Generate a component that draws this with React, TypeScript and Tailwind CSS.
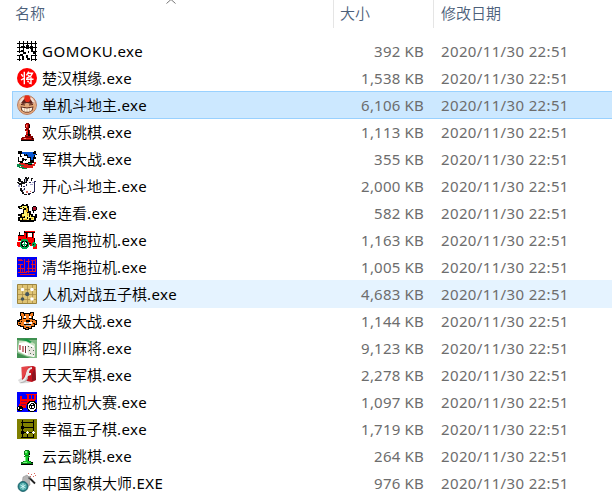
import type { ReactNode } from 'react';
import clsx from 'clsx';

type FileRow = {
  name: string;
  ext?: string;
  size: string;
  icon: ReactNode;
  state?: 'selected' | 'hover';
};

const modified = '2020/11/30 22:51';

const Icon = ({ children, smooth = false }: { children: ReactNode; smooth?: boolean }) => (
  <svg
    viewBox="0 0 20 20"
    className="h-5 w-5 shrink-0"
    shapeRendering={smooth ? 'auto' : 'crispEdges'}
    fill="none"
  >
    {children}
  </svg>
);

const files: FileRow[] = [
  {
    name: '',
    ext: 'GOMOKU.exe',
    size: '392 KB',
    icon: (
      <Icon>
        <path fill="#000" d="M0 2h20v1H0zM0 6h20v1H0zM0 10h4v1H0zM15 10h5v1h-5zM0 14h6v1H0zM14 14h6v1h-6zM0 18h4v1H0zM14 18h6v1h-6zM2 0h1v12H2zM2 14h1v6H2zM6 0h1v9H6zM10 0h1v6h-1zM14 0h1v8h-1zM14 15h1v5h-1zM18 0h1v20h-1z" />
        <path fill="#000" d="M4 5h4v2H4zM9 4h3v4H9zM13 5h3v3h-3zM4 9h3v2H4zM6 11h3v2H6zM14 8h2v3h-2zM5 15h2v4H5zM11 10h1v2h-1zM9 14h2v3H9zM16 11h2v2h-2zM10 17h3v2h-3zM3 13h3v1H3z" />
      </Icon>
    ),
  },
  {
    name: '楚汉棋缘',
    size: '1,538 KB',
    icon: (
      <Icon smooth>
        <circle cx="10" cy="10" r="10" fill="#f00" />
        <path stroke="#fff" strokeWidth="1.4" d="M7.3 3.8v12.5M4.3 6.2l1.6 2.5M4 12l3-1.7M11.8 3.7 9.4 7.4M11 5.2h4.4l-1.7 3-4.2 2M11 7l1.5 1.2M9 11.2h7.5M14 9.3v6.3l-2-.7M10.5 12.8l1.2 1.5" />
      </Icon>
    ),
  },
  {
    name: '单机斗地主',
    size: '6,106 KB',
    state: 'selected',
    icon: (
      <Icon smooth>
        <circle cx="10" cy="10" r="9.4" fill="#e8b795" stroke="#b57457" />
        <path fill="#e3a878" d="M2 9h16l1 3-3 5-6 2-6-2-3-5z" />
        <path fill="#62261c" d="M4 8c0-4 3-5 6-5s6 1 7 5l-3 1-4-1-4 1z" />
        <path fill="#e52b19" d="M7 4l1-3.5h4L14 4l-2 3H9z" />
        <path fill="#f4ded0" d="M2.500 7l3-4.500 2 1L4 8zM13 3.500l2-1L17.500 7 16 8z" />
        <path fill="#552014" d="M4 9l4 .5v1L4 10zM12 9.5l4-.5v1l-4 .5zM3.5 11.5l6.500 1 6.500-1-1 4L12 17.500H8l-3.5-2z" />
        <path fill="#fff3dc" d="M4.5 12.5l5.500 1 5.500-1-1 3-2.5 1.300H8l-2.5-1.300z" />
        <path stroke="#b58060" strokeWidth=".4" d="M7.5 13v3.5M10 13.5V17M12.5 13v3.5" />
      </Icon>
    ),
  },
  {
    name: '欢乐跳棋',
    size: '1,113 KB',
    icon: (
      <Icon>
        <path fill="#800" d="M9 1h3v1h1v4h-1v2h1v4h1v2h2v2h1v3H4v-3h1v-1h3v-2h1V9H8V7h1V6H8V2h1z" />
        <path fill="#e01812" d="M9 2h2v4H9zM9 8h2v4H9zM9 13h3v1H9zM6 16h8v1H6z" />
        <path fill="#ff8b80" d="M9 3h1v2H9zM9 9h1v1H9zM7 16h2v1H7z" />
        <path fill="#000" d="M12 3h1v3h-1zM11 8h1v4h1v2h-2zM4 18h13v1H4zM15 16h1v1h-1z" />
      </Icon>
    ),
  },
  {
    name: '军棋大战',
    size: '355 KB',
    icon: (
      <Icon>
        <path fill="#000" d="M1 2h4v1h12V2h2v3h1v1h-2v2h1v2h-2v4h-2v2h-4v1H6v-2H3v-2H1V8h2V5H1z" />
        <path fill="#0757d5" d="M5 3h11v2H5zM8 5h11v1H8zM11 6h6v2h-6zM14 8h2v3h-2z" />
        <path fill="#fff" d="M4 5h3v2H4zM2 8h3v4H2zM5 7h5v3H5zM10 9h3v4h-2v1H7v-3h3zM6 12h3v2H6z" />
        <path fill="#e1201a" d="M2 14h6v1h3v1h4v-1h2v-2h2v2h-1v2h-2v2H7v-1H4v-1H2z" />
        <path fill="#078b4b" d="M0 15h4v1h3v1H3v1h4v1h3v1H5v-1H2v-1H0zM11 14h4v1h-4z" />
        <path fill="#000" d="M5 9h2v1H5zM9 5h1v2H9zM8 11h1v1H8zM13 11h1v2h-1z" />
      </Icon>
    ),
  },
  {
    name: '开心斗地主',
    size: '2,000 KB',
    icon: (
      <Icon>
        <path fill="#fff" d="M3 4h5v3h5l5-2v11l-4 2-6 1-4-4 1-5-2-4z" />
        <path fill="#111" d="M1 2h2v1h1v2h2v1h1V3h1V1h2v1h1V1h1v2h-1v2h-1v2H8v1H5v3H4V9H2V8H1V7H0V6h2v1h2V6H2V5H1zM14 2h2v1h-1v2h-1zM4 12h1v2h1v2h1v2H5v-2H4v-1H3v-3zM7 18h3v1H7zM11 18h2v1h-2zM15 16h2v1h-2z" />
        <path fill="#262657" d="M9 8h1v2H9zM12 6h2v1h-2zM17 5h2v1h-1v10h-1zM11 17h3v1h-3zM6 10h2v1H6zM7 12h1v2H7z" />
        <path fill="#a8a8cf" d="M8 3h1v3H8zM1 9h2v2H1zM6 13h1v2H6zM15 6h2v1h-2zM16 15h1v1h-1zM13 8h3v1h-3z" />
        <path fill="#d76a61" d="M9 15h2v2H9zM13 15h1v1h-1z" />
      </Icon>
    ),
  },
  {
    name: '连连看',
    size: '582 KB',
    icon: (
      <Icon>
        <path fill="#000" d="M5 1h2v1h2V1h2v2h1v5h2v3h2v2h2v-2h2v4h-1v3h-2v1H3v-1H1v-4h2v-1H1v-2h3v-1h2V6H2V5H1V3h3V2h1z" />
        <path fill="#fff36c" d="M5 3h5v2H7v1H5V5H3V4h2zM7 7h3v3h2v2h2v3h-2v2H6v-2h2v-2H5v-2h2zM3 15h2v2H3zM14 14h3v3h-3z" />
        <path fill="#d9a816" d="M9 5h2v4H9zM10 10h1v3h-1zM5 13h2v1H5zM6 16h4v1H6zM14 15h2v1h-2z" />
        <path fill="#000" d="M16 3h3v1h1v3h-1v1h-2v2h-1V8h-1V4h1z" />
        <path fill="#b1162f" d="M16 4h3v3h-3z" />
        <path fill="#000" d="M6 4h1v1H6zM12 12h1v2h-1zM10 14h1v2h-1z" />
      </Icon>
    ),
  },
  {
    name: '美眉拖拉机',
    size: '1,163 KB',
    icon: (
      <Icon>
        <path fill="#f00" d="M8 1h10v2h-1v5h1v6h2v5h-4v-3h-3v-1h-3v-4H7V9H1V5h6V3h1zM0 12h3v5H1v-1H0z" />
        <path fill="#f00" d="M1 5h8v6H1z" />
        <path fill="#fff" d="M11 3h4v4h-4zM9 3h1v3H9z" />
        <path fill="#000" d="M7 1h1v1h10v1H7zM2 2h1v3H2zM1 5h6v1H1zM9 3h1v5H9zM15 2h1v6h-1zM17 8h1v4h-1zM2 9h2v1H2zM11 13h3v1h-3z" />
        <path fill="#00a850" d="M5 9h5v1h1v2h1v5h-1v1h-1v1H5v-1H4v-1H3v-5h1v-2h1zM16 12h2v1h1v3h-1v1h-2v-1h-1v-3h1z" />
        <path fill="#000" d="M5 11h5v1h1v4h-1v1H5v-1H4v-4h1zM16 14h1v1h-1z" />
        <path fill="#fff" d="M6 12h3v1h1v2H9v1H6v-1H5v-2h1z" />
        <path fill="#00a850" d="M7 11h1v6H7zM5 14h5v1H5z" />
      </Icon>
    ),
  },
  {
    name: '清华拖拉机',
    size: '1,005 KB',
    icon: (
      <Icon>
        <path fill="#0000f5" d="M0 0h20v20H0z" />
        <path stroke="#e0142c" d="M1 3.5h5M1 7.5h5M1 11.5h7M3.5 8v8M1 15.5h9M7.5 2v13M11.5 2v14M9 4.5h4M10 11.5h9M15.5 3v11M14 7.5h5M18.5 2v12M9 14.5h10M3 17.5h15" />
        <path stroke="#a80f65" d="M1 2.5h4M5.5 12v3M14 3.5h5" />
      </Icon>
    ),
  },
  {
    name: '人机对战五子棋',
    size: '4,683 KB',
    state: 'hover',
    icon: (
      <Icon smooth>
        <path fill="#dfc474" stroke="#9d853e" d="M.5.5h19v19H.5z" />
        <path stroke="#a88d4a" strokeWidth=".8" d="M1 5.5h18M1 10.5h18M1 15.5h18M5.5 1v18M10.5 1v18M15.5 1v18" />
        <circle cx="5.5" cy="5.5" r="1.8" fill="#fff" />
        <circle cx="15" cy="5.5" r="1.8" fill="#fff" />
        <circle cx="15" cy="15" r="1.8" fill="#fff" />
        <circle cx="10.2" cy="10.2" r="2.1" fill="#43545d" />
        <circle cx="5.5" cy="15" r="1.8" fill="#43545d" />
      </Icon>
    ),
  },
  {
    name: '升级大战',
    size: '1,144 KB',
    icon: (
      <Icon>
        <path fill="#000" d="M3 1h4v1h6V1h4v4h-1v3h2v1h2v5h-2v2h-3v2h-3v1H8v-1H6v-2H3v-1H1v-1H0V9h2V8h2V5H3z" />
        <path fill="#f37d1d" d="M4 2h2v1h8V2h2v3h-1v4h3v1h1v3h-2v2h-3v2h-3v1H9v-1H7v-2H4v-1H1v-3h2V9h2V5H4z" />
        <path fill="#000" d="M7 3h1v2H7zM12 3h1v2h-1zM6 7h3v1H6zM12 7h3v1h-3zM9 9h4v2H9zM2 12h2v1H2zM16 12h2v1h-2zM15 10h1v1h-1zM4 10h1v1H4zM7 13h7v1H7zM9 16h3v1H9z" />
        <path fill="#fff" d="M7 5h2v2H7zM12 5h2v2h-2zM7 11h2v2H7zM12 11h3v2h-3z" />
        <path fill="#bbb" d="M9 12h3v1H9zM9 14h5v1H9z" />
      </Icon>
    ),
  },
  {
    name: '四川麻将',
    size: '9,123 KB',
    icon: (
      <Icon smooth>
        <path fill="#82b986" d="M0 0h20v20H0z" />
        <path fill="#3f8f50" d="M0 0h20v2H0zM0 15l13 5H0z" />
        <path fill="#c9e2c3" d="M2 3h11l5 3v13l-8-1-9-4z" />
        <path fill="#fff" d="M2 5l7-1 8 4v11l-8-2-8-4z" />
        <path fill="#e8e5df" d="M10 7l8 3v8l-7-1z" />
        <path stroke="#ad292f" strokeWidth="1.2" d="M3 7v5M6 8v6" />
        <path stroke="#722e37" d="M8.5 8v7" />
        <path fill="#159744" d="M4 2l6-1 5 3-2 1-4-2z" />
        <path fill="#477151" d="M11 8h1v1h-1zM14 9h1v1h-1zM12 12h1v1h-1zM16 12h1v1h-1zM13 15h1v1h-1zM16 16h1v1h-1z" />
      </Icon>
    ),
  },
  {
    name: '天天军棋',
    size: '2,278 KB',
    icon: (
      <Icon smooth>
        <path fill="#ddd" d="M1 15l8-5 10 5-8 3-8 .5z" />
        <path fill="#c4151f" d="M4.5 2L16 1l2.500 1 .5 13-4 2-10-2z" />
        <path fill="#e54448" d="M5 2l7-.5-2 4-4 8H5z" />
        <path fill="#8c1420" d="M15 9l3-6 1 12-4 1z" />
        <path fill="#e9e9e9" d="M15 2c-3 0-5 2-6 6-1 4-2 7-7 8l1 2c6-1 7-4 8-7l3-1V8h-2c0-2 1-4 3-4z" />
        <path fill="#b8b8b8" d="M3 17c4 0 6-2 7-5l1 1c-1 3-3 5-7 5z" />
      </Icon>
    ),
  },
  {
    name: '拖拉机大赛',
    size: '1,097 KB',
    icon: (
      <Icon>
        <path fill="#00f" d="M0 0h20v20H0z" />
        <path fill="#f00" d="M9 2h11v1h-1v5h-1v2h1v3H9v3H2v-4h1V7h7V3H9zM3 4h2v4H3z" />
        <path fill="#00f" d="M12 3h2v4h-2zM15 3h2v4h-2z" />
        <path fill="#900050" d="M4 9h6v1H4zM4 12h5v1H4z" />
        <path fill="#000" d="M12 9h6v1h1v1h1v6h-1v2h-2v1h-4v-1h-2v-2h-1v-6h1v-1h1zM1 14h4v1h1v3H5v1H1v-1H0v-3h1z" />
        <path fill="#fff" d="M13 10h4v1h1v1h1v5h-1v1h-1v1h-4v-1h-1v-1h-1v-5h1v-1h1zM1 15h1v2H1zM3 17h2v1H3z" />
        <path fill="#000" d="M14 11h3v1h1v4h-1v1h-4v-1h-1v-3h1v-1h1z" />
        <path fill="#fff" d="M14 12h2v1h-2zM13 14h1v2h-1zM15 14h2v2h-2z" />
      </Icon>
    ),
  },
  {
    name: '幸福五子棋',
    size: '1,719 KB',
    icon: (
      <Icon>
        <path fill="#808000" d="M0 0h20v20H0z" />
        <path fill="#000" d="M5 1h1v18H5zM16 1h1v18h-1zM4 3h13v1H4zM4 8h13v1H4zM4 13h14v1H4zM4 18h13v1H4zM4 7h3v3H4zM4 12h3v3H4zM10 13h1v5h-1z" />
        <path fill="#fff" d="M10 12h1v1h1v1h-1v1h-1v-1H9v-1h1zM16 12h1v1h1v1h-1v1h-1v-1h-1v-1h1z" />
        <path fill="#808000" d="M13 14h3v1h-3z" />
      </Icon>
    ),
  },
  {
    name: '云云跳棋',
    size: '264 KB',
    icon: (
      <Icon>
        <path fill="#087c16" d="M8 4h4v1h1v4h-1v1h1v1h-1v4h2v1h2v3H4v-3h2v-1h2v-4H7v-1h1V9H7V5h1z" />
        <path fill="#11cc25" d="M8 5h3v4H8zM8 10h3v5h1v1H7v-1h1zM6 16h8v1H6z" />
        <path fill="#7cf283" d="M8 5h2v2H8zM8 11h1v4H8zM6 16h4v1H6z" />
        <path fill="#000" d="M4 18h12v1H4zM12 7h1v2h-1zM11 12h1v3h-1zM14 16h2v1h-2z" />
      </Icon>
    ),
  },
  {
    name: '中国象棋大师',
    ext: '.EXE',
    size: '976 KB',
    icon: (
      <Icon smooth>
        <path fill="#b5b5b5" stroke="#888" strokeWidth=".5" d="M6 4l4-2 2 2 1 8-3 2-5-3z" />
        <circle cx="6" cy="13.5" r="5" fill="#247c82" stroke="#145b63" strokeWidth=".8" />
        <circle cx="6" cy="13.5" r="3.7" fill="#50aaa9" />
        <path stroke="#dff" strokeWidth=".8" d="M6 10.5v6M3.4 12l5.2 3M8.6 12l-5.2 3" />
        <path stroke="#222" strokeWidth="1.8" d="M11.5 4l6.500 6.500" />
        <path stroke="#fff" strokeWidth=".8" d="M11.5 4 13 5.5" />
        <path fill="#d9665c" d="M11 0h1v1h-1zM14 1h1v1h-1zM17 0h1v1h-1zM16 3h1v1h-1zM13 3h1v1h-1zM18 2h1v1h-1z" />
      </Icon>
    ),
  },
];

const HeaderRow = () => (
  <div className="flex h-7 text-[15px] leading-[27px] font-[350] text-[#4c607a]">
    <div className="relative w-[334px] border-r border-[#e5e5e5] pl-[15px]">
      名称
      {/* sort direction arrow */}
      <svg viewBox="0 0 10 4" className="absolute top-0 left-[166px] h-1 w-2.5" fill="none">
        <path d="M.5 3.5 5 -.5l4.5 4" stroke="#777" />
      </svg>
    </div>
    <div className="w-[100px] border-r border-[#e5e5e5] pl-[6px]">大小</div>
    <div className="pl-[7px]">修改日期</div>
  </div>
);

const Row = ({ name, ext = '.exe', size, icon, state }: FileRow) => (
  <div
    className={clsx(
      '-mb-px ml-3 flex h-7 items-center border border-r-0 pl-1 text-[15px]',
      state === 'selected' && 'border-[#99d1ff] bg-[#cce8ff]',
      state === 'hover' && 'border-[#e5f3ff] bg-[#e5f3ff]',
      !state && 'border-transparent'
    )}
  >
    {icon}
    <span className="w-[283px] pl-[5px] font-[350] text-black">
      {name}
      <span className={clsx('font-normal', name ? 'tracking-[0.45px]' : 'tracking-[0.5px]')}>
        {ext}
      </span>
    </span>
    <span className="w-[104px] text-right tracking-[0.2px] text-[#6d6d6d]">{size}</span>
    <span className="pl-[17px] tracking-[0.36px] text-[#6d6d6d]">{modified}</span>
  </div>
);

const App = () => {
  return (
    <div className="h-[495px] w-[612px] overflow-hidden bg-white font-['Noto_Sans','Noto_Sans_CJK_SC',sans-serif] whitespace-nowrap">
      <HeaderRow />
      <div className="pt-[9px]">
        {files.map((file) => (
          <Row key={file.size} {...file} />
        ))}
      </div>
    </div>
  );
};

export default App;
